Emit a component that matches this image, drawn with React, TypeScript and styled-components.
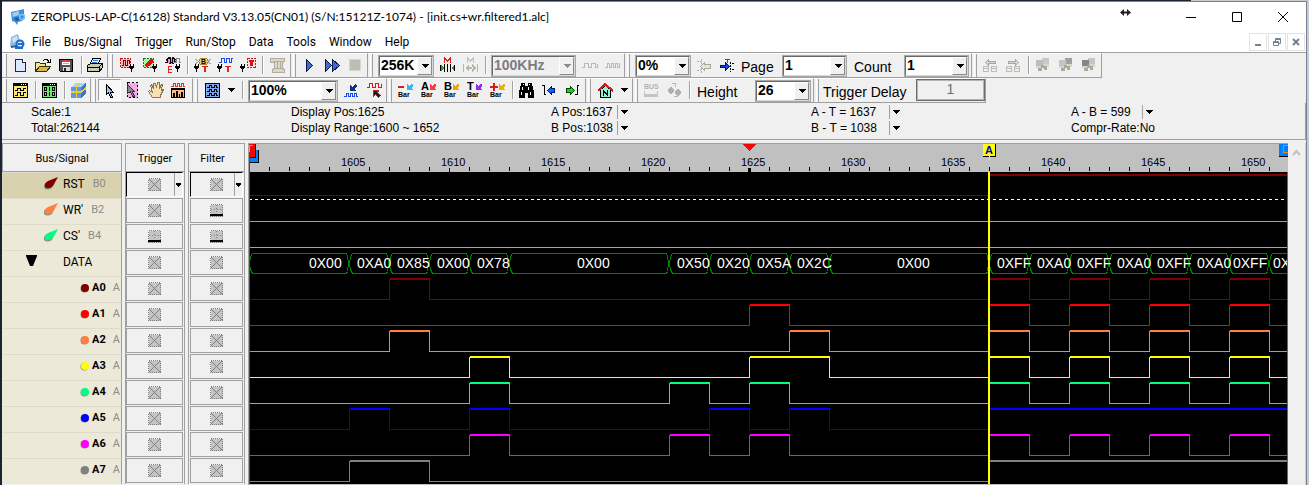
import React from "react";
import styled, { createGlobalStyle, css } from "styled-components";

const CAPTION = `Lato, "Open Sans", sans-serif`;
const UI = `Roboto, "Open Sans", sans-serif`;
const ARIAL = `"Liberation Sans", Arial, sans-serif`;
const LINE = "#a0a0a0";
const FACE = "#f0f0f0";

const GlobalStyle = createGlobalStyle`
  *, *::before, *::after { box-sizing: border-box; }
  body { margin: 0; background: #1b2430; color: #000; font: 12px/16px ${ARIAL}; overflow: hidden; }
  button, select, input { font: inherit; color: inherit; margin: 0; padding: 0; border: 0; background: none; border-radius: 0; }
  svg { display: block; flex: none; }
`;

/* ---------- window frame ---------- */

const Desktop = styled.div`
  min-height: 100vh;
  padding: 1px 2px 0 2px;
  background: linear-gradient(90deg, #1b2430 91%, #c9ccc9 91%);
`;

const AppWindow = styled.div`
  position: relative;
  display: flex;
  flex-direction: column;
  min-height: calc(100vh - 1px);
  border: 1px solid #76829a;
  border-width: 1px 1px 0 0;
  background: ${FACE};
`;

const TitleBar = styled.header`
  display: flex;
  align-items: center;
  height: 30px;
  padding-left: 8px;
  gap: 5px;
  background: #fff;
`;

const Title = styled.h1`
  flex: 1;
  margin: 0;
  font: 12px/16px ${CAPTION};
  white-space: nowrap;
`;

const CaptionButtons = styled.div`
  display: flex;
`;

const CaptionButton = styled.button`
  display: flex;
  align-items: center;
  justify-content: center;
  width: 46px;
  height: 28px;
`;

const ResizePointer = styled.svg`
  position: absolute;
  top: 6px;
  right: 175px;
`;

const MenuBar = styled.nav`
  display: flex;
  align-items: center;
  height: 20px;
  padding-left: 7px;
  background: #fff;
`;

const MenuItems = styled.div`
  display: flex;
  flex: 1;
  gap: 13px;
  margin-left: 7px;
`;

const MenuItem = styled.button`
  font: 12px/16px ${UI};
`;

const MdiButtons = styled.div`
  display: flex;
  gap: 1px;
  margin-right: 1px;
`;

const MdiButton = styled.button`
  display: flex;
  align-items: center;
  justify-content: center;
  width: 18px;
  height: 18px;
  border: 1px solid #e3e3e3;
`;

/* ---------- toolbars ---------- */

const ToolArea = styled.div`
  border-top: 1px solid ${LINE};
`;

const ToolRow = styled.div`
  display: flex;
  height: 25px;
`;

const ToolGroup = styled.div<{ $end?: number }>`
  display: flex;
  align-items: flex-start;
  padding-right: ${(p) => p.$end ?? 0}px;
  border-top: 1px solid #fff;
  border-right: 1px solid ${LINE};
  border-bottom: 1px solid ${LINE};
`;

const Grip = styled.span`
  align-self: stretch;
  width: 3px;
  margin: 0 2px;
  border-left: 1px solid #fff;
  border-right: 1px solid ${LINE};
`;

const ToolButton = styled.button<{ $pressed?: boolean }>`
  display: flex;
  align-items: center;
  justify-content: center;
  width: 23px;
  height: 22px;
  ${(p) =>
    p.$pressed &&
    css`
      background: #f8f8f8;
      border: 1px solid;
      border-color: ${LINE} #fff #fff ${LINE};
    `}
`;

const Separator = styled.span`
  width: 6px;
  height: 18px;
  margin-top: 2px;
  background: linear-gradient(90deg, transparent 3px, ${LINE} 3px 4px, #fff 4px 5px, transparent 5px);
`;

const DropButton = styled.button`
  display: flex;
  align-items: center;
  justify-content: center;
  width: 16px;
  height: 22px;
`;

const ToolLabel = styled.label<{ $width: number; $indent?: number }>`
  width: ${(p) => p.$width}px;
  padding: 4px 0 0 ${(p) => p.$indent ?? 2}px;
  font-size: 14px;
  line-height: 18px;
  white-space: nowrap;
`;

const ComboFrame = styled.span<{ $width: number; $disabled?: boolean }>`
  display: grid;
  grid-template-columns: 1fr 15px;
  width: ${(p) => p.$width}px;
  height: 22px;
  margin: 1px 2px 0 3px;
  border: 2px solid;
  border-color: #696969 #d8d8d8 #d8d8d8 #696969;
  outline: 1px solid #a8a8a8;
  outline-offset: -1px;
  background: ${(p) => (p.$disabled ? FACE : "#fff")};
`;

const ComboSelect = styled.select`
  grid-area: 1 / 1 / 2 / 3;
  appearance: none;
  padding: 0 0 2px 1px;
  font-size: 14px;
  line-height: 16px;
  font-weight: 700;
  &:disabled { color: #7c7c7c; opacity: 1; }
`;

const ComboArrow = styled.span`
  grid-area: 1 / 2;
  display: flex;
  align-items: center;
  justify-content: center;
  pointer-events: none;
  background: ${FACE};
  border: 1px solid;
  border-color: #fff #8a8a8a #8a8a8a #fff;
`;

const DelayField = styled.input`
  width: 69px;
  height: 22px;
  margin-left: 3px;
  padding-bottom: 2px;
  border: 1px solid #6d6d6d;
  outline: 1px solid #b4b4b4;
  outline-offset: -2px;
  font-size: 14px;
  text-align: center;
  color: #6d6d6d;
`;

/* ---------- status panel ---------- */

const StatusPanel = styled.section`
  display: flex;
  height: 37px;
  padding-left: 29px;
  border-bottom: 1px solid ${LINE};
  border-right: 1px solid ${LINE};
`;

const StatusColumn = styled.div`
  flex: 0 0 260px;
  padding-top: 1px;
  &:last-child { flex: 1; }
`;

const StatusLine = styled.div`
  display: flex;
  align-items: center;
  height: 16px;
  font-size: 12px;
  line-height: 16px;
  white-space: nowrap;
`;

const StatusText = styled.span<{ $width: number }>`
  width: ${(p) => p.$width}px;
`;

const StatusDrop = styled.button`
  display: flex;
  align-items: center;
  height: 14px;
  padding-left: 2px;
  border-left: 1px solid ${LINE};
`;

/* ---------- signal table ---------- */

const Workspace = styled.main`
  display: flex;
  flex: 1;
  margin-top: 3px;
`;

const SignalTable = styled.table`
  align-self: flex-start;
  table-layout: fixed;
  width: 243px;
  border-collapse: separate;
  border-spacing: 0;
  font: 11px/16px ${UI};
`;

const HeadCell = styled.th<{ $width: number; $gap: number }>`
  width: ${(p) => p.$width}px;
  height: 29px;
  padding: 0 0 0 ${(p) => p.$gap}px;
  font-weight: 400;
`;

const HeadBox = styled.div<{ $shift?: number }>`
  height: 29px;
  padding: 7px ${(p) => p.$shift ?? 0}px 0 0;
  border: 1px solid ${LINE};
`;

const NameCell = styled.td<{ $selected?: boolean }>`
  height: 26px;
  padding: 0;
  border-top: 1px solid #dedbcb;
  border-right: 1px solid ${LINE};
  background: ${(p) => (p.$selected ? "#d9d2ae" : "#ece9d8")};
`;

const NameRow = styled.div<{ $indent: number }>`
  display: flex;
  align-items: center;
  height: 25px;
  padding: 0 0 3px ${(p) => p.$indent}px;
  white-space: nowrap;
`;

const SignalName = styled.span<{ $bold?: boolean; $start: number }>`
  margin: 0 ${(p) => (p.$bold ? 7 : 8)}px 0 ${(p) => p.$start}px;
  font-size: ${(p) => (p.$bold ? 11 : 12)}px;
  font-weight: ${(p) => (p.$bold ? 700 : 400)};
`;

const PortName = styled.span`
  font-size: 11px;
  color: #8c8c8c;
`;

const StateCell = styled.td`
  height: 26px;
  padding: 0 0 0 3px;
`;

const StateFrame = styled.div<{ $filter?: boolean }>`
  height: 26px;
  padding: 0 1px 1px ${(p) => (p.$filter ? 1 : 0)}px;
  border-left: 1px solid ${LINE};
  border-right: 1px solid ${LINE};
`;

const StateButton = styled.button<{ $active?: boolean }>`
  display: flex;
  align-items: center;
  justify-content: center;
  width: 100%;
  height: 25px;
  border: 1px solid ${LINE};
  ${(p) =>
    p.$active &&
    css`
      justify-content: flex-end;
      border-color: #000 #fff #fff #000;
      padding-right: 1px;
    `}
`;

const StateDrop = styled.span<{ $space: number }>`
  display: flex;
  align-items: center;
  align-self: stretch;
  margin-left: ${(p) => p.$space}px;
  padding-left: 1px;
  border-left: 1px solid ${LINE};
`;

/* ---------- waveform ---------- */

const WavePane = styled.div`
  flex: 1;
  display: flex;
  min-width: 0;
  background: linear-gradient(#c0c0c0 29px, #000 29px);
  margin-left: 3px;
  border-top: 1px solid ${LINE};
  border-left: 1px solid ${LINE};
`;

const WaveSvg = styled.svg`
  flex: 1;
  width: 100%;
  height: 342px;
  font-family: ${ARIAL};
`;

const ScrollTrack = styled.div`
  display: flex;
  justify-content: center;
  width: 18px;
  padding-top: 6px;
  border-right: 1px solid #d0d0d0;
`;

/* ---------- icons ---------- */

type Drawing = React.ReactNode;

const Probe = ({ x, y }: { x: number; y: number }) => (
  <path fill="#000" d={`M${x} ${y}h1v2h2v-2h1v4h-1v1h-1v3h-1v-3h-1v-1h-1z`} />
);

const tee = (x: number): Drawing => <path fill="#e82020" d={`M${x} 11h6v1h-2v5h-2v-5h-2z`} />;

const bar = (mark: string, markColor: string, arrow: string): Drawing => (
  <>
    {mark === "-" ? (
      <path fill={markColor} d="M4 6h6v2h-6z" />
    ) : mark === "+" ? (
      <path fill={markColor} d="M4 6h3v-3h2v3h3v2h-3v3h-2v-3h-3z" />
    ) : (
      <text x="4" y="10" fontSize="11" fontWeight="700" fill={markColor}>{mark}</text>
    )}
    <path fill={arrow} d="M13 4v6h6l-2-2 2-2v-2h-2l-2 2z" />
    <text x="4" y="17" fontSize="7" fontWeight="700">Bar</text>
  </>
);

const pc = (screen: string, server: string): Drawing => (
  <>
    <path fill={server} d="M11 3h7v6h-7z" />
    <path fill={screen} d="M5 5h7v6h-7z" />
    <path fill="#dad7bf" d="M5 11h8v2h-8zM12 9h6v3h-6z" />
    <path fill="#a8a8a4" d="M10 10h3v3h-3zM7 13h4v3h-4zM13 11h3v4h-3z" />
  </>
);

const windowFrame = (fill: string): Drawing => (
  <>
    <path fill={fill} stroke="#000" d="M4.500 3.500h14v14h-14z" />
    <path fill="#000" d="M4 3h15v3h-15z" />
    <path fill="#fff" d="M12 4h1v1h-1zM14 4h1v1h-1zM16 4h1v1h-1z" />
  </>
);

const pageSplit: Drawing = (
  <path fill="none" stroke="#bcbcb4" d="M4.500 11.500h5v5h-5zM12.500 11.500h5v5h-5zM4 13.500h6M12 13.500h6" />
);

const art: Record<string, Drawing> = {
  create: (
    <>
      <path fill="#dce9ff" stroke="#1c2a4a" d="M6.500 4.500h7l3 3v9h-10z" />
      <path fill="#fff" stroke="#1c2a4a" d="M13.500 4.500v3h3" />
    </>
  ),
  open: (
    <>
      <path fill="#f4e48c" stroke="#3b3000" d="M3.500 16.500v-9h4l1 1h5v3" />
      <path fill="#d8b850" stroke="#3b3000" d="M3.500 16.500l4-5h11l-4 5z" />
      <path fill="none" stroke="#000" d="M11 5.500l2-1h2l2 2M18.500 4v4M15 7.500h4" />
    </>
  ),
  save: (
    <>
      <path fill="#505058" stroke="#000" d="M4.500 4.500h13v12h-12l-1-1z" />
      <path fill="#fff" d="M7 5h8v5h-8z" />
      <path fill="#d84030" d="M7 5h8v2h-8z" />
      <path stroke="#b0b0b0" d="M8 8.500h6" />
      <path fill="#d8d8d8" d="M8 12h7v4h-7z" />
      <path fill="#222" d="M9 13h2v3h-2z" />
    </>
  ),
  print: (
    <>
      <path fill="#dff4ff" stroke="#000" d="M8.500 3.500h8l-2 5h-8z" />
      <path stroke="#2f7ad0" d="M9 5.500h5M8 7.500h5" />
      <path fill="#c8c8b0" stroke="#000" d="M3.500 10.500l3-2h12v4l-3 4h-12z" />
      <path fill="#f0e020" d="M5 14h7v1h-7z" />
      <path fill="none" stroke="#000" d="M3 12.500h12v4M15 12l3-3" />
    </>
  ),
  trigBus: (
    <>
      <path fill="#f6bcbc" stroke="#c01818" strokeDasharray="2 1" d="M5.500 3.500h10v9h-10z" />
      <path fill="none" stroke="#800000" d="M7 10.500h1v-5h2v5h2v-5h2v3" />
      <Probe x={15} y={9} />
    </>
  ),
  trigEdge: (
    <>
      <path fill="#a8f4a8" stroke="#108010" strokeDasharray="2 1" d="M5.500 3.500h10v9h-10z" />
      <path fill="#e01010" d="M12 4h3v3l-4 4-3 1-1-2 2-3z" />
      <Probe x={15} y={9} />
    </>
  ),
  trigEvent: (
    <>
      <path fill="#f08af0" stroke="#301030" strokeDasharray="2 1" d="M7.500 2.500h5l2 2v2l-2 2h-5l-2-2v-2z" />
      <path fill="none" stroke="#000" d="M4 7.500h2v-4h3v4h2v-4h2v4" />
      <path fill="none" stroke="#888" d="M13 7.500h2v-4h3v4h2" />
      <path fill="#e82020" d="M7 11h4v1h-3v2h3v1h-3v2h3v1h-4z" />
      <Probe x={15} y={9} />
    </>
  ),
  busTrigger: (
    <>
      <path fill="#f3d37a" stroke="#a88430" d="M8.500 6.500l2-3h6l2 3-2 3h-6z" />
      <path stroke="#aaa" d="M5 4l3 2M5 9l3-2M21 4l-3 2M21 9l-3-2" />
      <text x="11" y="9" fontSize="7" fontWeight="700">B</text>
      <Probe x={5} y={9} />
      {tee(12)}
    </>
  ),
  waveTrigger: (
    <>
      <path fill="none" stroke="#1748ff" d="M6 7.500h2v-4h3v4h2v-4h3v4h2v-4h2" />
      <Probe x={5} y={9} />
      {tee(12)}
    </>
  ),
  probeTrigger: (
    <>
      <path fill="#fde4e4" stroke="#d01818" strokeDasharray="2 1" d="M11.500 3.500h8v9h-8z" />
      <path fill="#e01010" d="M13 5h5v2h-1v4h-3v-4h-1z" />
      <Probe x={5} y={9} />
    </>
  ),
  scroll: (
    <>
      <path fill="#dad7c4" stroke="#b0aea0" d="M5.500 3.500h14v3l-2 1v6l2 1v3h-12v-3l2-1v-6h-4z" />
      <path fill="none" stroke="#b0aea0" d="M8 6.500h9M9 13.500h8M12.500 7v7M15.500 7v7" />
    </>
  ),
  run: <path fill="#4468c8" stroke="#0c1a50" d="M8.500 4.500v12l6-6z" />,
  repeat: <path fill="#4468c8" stroke="#0c1a50" d="M4.500 4.500v12l6-6zM11.500 4.500v12l7-6z" />,
  stop: <path fill="#bdbdb5" stroke="#d8d6c8" d="M5.500 4.500h11v11h-11z" />,
  memOn: (
    <>
      <path fill="none" stroke="#e01818" d="M8.500 8v-5l3 3 3-3v5" />
      <path fill="#000" d="M8 9h1v8h-1zM14 9h1v8h-1zM11 9h1v8h-1zM4 10h1v6h-1zM18 10h1v6h-1z" />
      <path fill="#18a818" d="M5 10l3 3-3 3zM18 10l-3 3 3 3z" />
    </>
  ),
  memOff: (
    <>
      <path fill="none" stroke="#c4c2b4" d="M8.500 8v-5l3 3 3-3v5" />
      <path fill="#b9b7aa" d="M4 9h1v8h-1zM18 9h1v8h-1zM6 13l4-4v8zM17 13l-4-4v8zM9 12h5v2h-5z" />
    </>
  ),
  pulses: <path fill="none" stroke="#bcb9a6" d="M4 12.500h2v-4h4v4h3v-4h4v4h2v-4" />,
  pulsesDense: <path fill="none" stroke="#bcb9a6" d="M4 12.500h2v-4h2v4h2v-4h2v4h2v-4h2v4h2v-4h1" />,
  jumpOff: (
    <>
      <path fill="none" stroke="#b4b2a4" strokeDasharray="2 1" d="M8.500 4v14M4 6.500h4M4 15.500h4" />
      <path fill="#e6e4d6" stroke="#aaa89c" d="M7.500 11.500l4-4v2h6v4h-6v2z" />
    </>
  ),
  jumpOn: (
    <>
      <path fill="#1748e8" stroke="#001060" d="M4.500 10.500h5v-3l4 4-4 4v-3h-5z" />
      <path fill="none" stroke="#000" strokeDasharray="2 1" d="M14.500 7v10M16 8.500h2M16 14.500h2" />
      <path fill="#e01818" d="M9 4h5v1h-2v3h-1v-3h-2z" />
    </>
  ),
  pageBack: (
    <>
      <path fill="#d8d8d0" stroke="#a8a8a0" d="M6.500 7.500l3-3v2h7v2h-7v2z" />
      {pageSplit}
    </>
  ),
  pageNext: (
    <>
      <path fill="#d8d8d0" stroke="#a8a8a0" d="M16.500 7.500l-3-3v2h-7v2h7v2z" />
      {pageSplit}
    </>
  ),
  pcA: pc("#bcbcbc", "#c8c8c8"),
  pcB: pc("#c4c4c4", "#a0a0a0"),
  pcC: pc("#868686", "#c4c4c4"),
  waveWindow: (
    <>
      {windowFrame("#ffe870")}
      <path fill="none" stroke="#000" d="M6 10.500h2v-2h3v2h3v-2h3M6 15.500h2v-3h3v3h3v-3h3" />
    </>
  ),
  listWindow: (
    <>
      {windowFrame("#70e870")}
      <path fill="none" stroke="#000" d="M6.500 7.500h2v3h-2zM11.500 7v4M14.500 7.500h2v3h-2zM6.500 12.500h2v3h-2zM11.500 12v4M14.500 12.500h2v3h-2z" />
    </>
  ),
  cube: (
    <>
      <path fill="#5c9be0" d="M4 7l4-4h11v10l-5 5h-10z" />
      <path fill="#b0d4f8" d="M4 7l4-4h11l-5 4z" />
      <path fill="#3c78c0" d="M14 7l5-4v10l-5 5z" />
      <path fill="none" stroke="#f0c830" d="M4 11.500h10l5-4M4 12.500h10l5-4M9.500 18v-11l3-4" />
    </>
  ),
  pointer: <path fill="#a8c0f0" stroke="#000" d="M8.500 4.500v10l2-2 2 5h2l-2-5h3z" />,
  areaPointer: (
    <>
      <path fill="#f8a8e8" stroke="#000" strokeDasharray="2 2" d="M6.500 2.500h10v15h-10z" />
      <path fill="#888" stroke="#333" d="M6.500 4.500v9l3-2 2 5h2l-2-5h2z" />
    </>
  ),
  hand: (
    <path fill="#f8e0b0" stroke="#8c7850" d="M8.500 17.500l-4-6 1-1 3 2-2-7 1-1 2 4v-5h2l1 4 1-5h2v6l2-4h1l-1 6 1-1h1l-3 6v2z" />
  ),
  histogram: (
    <>
      <path fill="none" stroke="#e03010" d="M4 6.500h2v-3h2v3h2v-3h2v3h2v-3h2v3h2" />
      <path fill="#ffb888" stroke="#000" d="M4.500 8.500h13v9h-13z" />
      <path fill="#000" d="M4 8h14v2h-14zM6 13h2v5h-2zM9 11h2v7h-2zM12 14h1v4h-1zM14 12h2v6h-2z" />
    </>
  ),
  waveStyle: (
    <>
      <path fill="#80a8f0" stroke="#000" d="M5.500 3.500h14v14h-14z" />
      <path fill="none" stroke="#000" d="M7 7.500h2v-2h2v2h3v-2h2v2h2M7 11.500h2v-2h2v2h3v-2h2v2h2M7 15.500h2v-2h2v2h3v-2h2v2h2" />
    </>
  ),
  waveIn: (
    <>
      <path fill="none" stroke="#1748e8" d="M4 16.500h2v-3h2v3h2v-3h2v3h2v-3h2v3h2" />
      <path fill="#103080" d="M10 5v6h6l-2-2 3-3-2-2-3 3z" />
    </>
  ),
  waveOut: (
    <>
      <path fill="none" stroke="#e01818" d="M4 7.500h2v-4h3v4h3v-4h3v4h3v-4" />
      <path fill="#301010" stroke="#c02020" d="M10.500 10.500h5l-1 2 3 3-2 2-3-3-2 2z" />
    </>
  ),
  barDel: bar("-", "#e01818", "#30b8f0"),
  barA: bar("A", "#000", "#f04040"),
  barB: bar("B", "#000", "#f0a800"),
  barT: bar("T", "#000", "#9030e8"),
  barAdd: bar("+", "#e01818", "#f0b000"),
  find: (
    <>
      <path fill="#000" d="M6 3h4v3h3v-3h4v3h1v4h1v8h-6v-5h-3v5h-6v-8h1v-4h1z" />
      <path fill="#fff" d="M8 4h1v1h-1zM14 4h1v1h-1zM7 7h1v3h-1zM13 7h1v3h-1zM6 12h1v3h-1zM15 12h1v3h-1z" />
    </>
  ),
  prev: (
    <>
      <path fill="none" stroke="#000" d="M4 5.500h2v9h2" />
      <path fill="#1860ff" stroke="#001870" d="M9.500 10.500l4-4v2h3v4h-3v2z" />
    </>
  ),
  next: (
    <>
      <path fill="none" stroke="#000" d="M18 5.500h-2v9h-2" />
      <path fill="#20d020" stroke="#004800" d="M13.500 10.500l-4-4v2h-4v4h4v2z" />
    </>
  ),
  home: (
    <>
      <path fill="#90f0d8" stroke="#000" d="M7.500 9.500l5-4 5 4v8h-10z" />
      <path fill="none" stroke="#e01818" strokeWidth="2" d="M5 11l7-7 8 7" />
      <path fill="none" stroke="#000" d="M10.500 16v-5l4 4v-5" />
    </>
  ),
  busOff: (
    <>
      <text x="4" y="9" fontSize="7" fontWeight="700" fill="#b4b4b4">BUS</text>
      <path fill="#c4c4c4" d="M4 11h1v3h12v-3h1v6h-14z" />
    </>
  ),
  nodeOff: (
    <>
      <path fill="#b0b0a8" d="M5 9l3-2 3 2v3l-3 2-3-2zM12 11l3-2 3 2v3l-3 2-3-2z" />
      <path fill="none" stroke="#b8b8b0" d="M9 3.500h3v3M11 16.500h3v-2" />
    </>
  ),
};

const Icon = ({ name }: { name: string }) => (
  <svg width="23" height="20" viewBox="0 0 23 20" shapeRendering="crispEdges" fontFamily={ARIAL} aria-hidden="true">
    {art[name]}
  </svg>
);

const Caret = ({ color = "#000", small }: { color?: string; small?: boolean }) => (
  <svg width={small ? 5 : 8} height={4} viewBox={small ? "0 0 5 4" : "0 0 8 4"} shapeRendering="crispEdges" aria-hidden="true">
    <path fill={color} d={small ? "M0 0h5v1l-2 3h-1l-2-3z" : "M0 0h8l-4 4z"} />
  </svg>
);

const StateGlyph = ({ kind }: { kind: "any" | "low" }) => (
  <svg width="13" height="13" viewBox="0 0 13 13" shapeRendering="crispEdges" aria-hidden="true">
    <path fill="#c4c4c4" stroke="#808080" strokeDasharray="1 1" d="M.5.5h12v12h-12z" />
    {kind === "any" ? (
      <path stroke="#808080" d="M1 1l11 11M12 1l-11 11" />
    ) : (
      <>
        <path stroke="#808080" strokeDasharray="1 2" d="M6.500 1v9M1 5.500h11" />
        <path fill="#000" d="M0 10h13v2h-13z" />
      </>
    )}
  </svg>
);

/* ---------- toolbar parts ---------- */

const Combo = ({ value, width, label, id, disabled }: { value: string; width: number; label?: string; id?: string; disabled?: boolean }) => (
  <ComboFrame $width={width} $disabled={disabled}>
    <ComboSelect id={id} aria-label={label} defaultValue={value} disabled={disabled}>
      <option>{value}</option>
    </ComboSelect>
    <ComboArrow>
      <Caret color={disabled ? "#8c8c8c" : "#000"} />
    </ComboArrow>
  </ComboFrame>
);

const Tools = ({ names, pressed }: { names: string; pressed?: string }) => (
  <>
    {names.split(" ").map((n, i) =>
      n === "|" ? (
        <Separator key={i} />
      ) : (
        <ToolButton key={i} type="button" aria-label={n} $pressed={n === pressed}>
          <Icon name={n} />
        </ToolButton>
      ),
    )}
  </>
);

/* ---------- data ---------- */

const ROW = 26;
const STEP = 20;
const START = 1600;
const END = 1652;

type Signal = {
  name: string;
  port?: string;
  color?: string;
  kind: "port" | "bus" | "line";
  trigger?: "low";
  filter?: "low";
  high?: number[][];
};

const burst = [[1637, 1639], [1641, 1643], [1645, 1647], [1649, 1651]];

const signals: Signal[] = [
  { name: "RST", port: "B0", color: "#800000", kind: "port", high: [[1637, 1660]] },
  { name: "WR'", port: "B2", color: "#ff8040", kind: "port", filter: "low", high: [] },
  { name: "CS'", port: "B4", color: "#00ff80", kind: "port", trigger: "low", filter: "low", high: [] },
  { name: "DATA", kind: "bus" },
  { name: "A0", port: "A", color: "#800000", kind: "line", high: [[1607, 1609], ...burst] },
  { name: "A1", port: "A", color: "#ff0000", kind: "line", high: [[1625, 1627], ...burst] },
  { name: "A2", port: "A", color: "#ff8040", kind: "line", high: [[1607, 1609], [1627, 1629], ...burst] },
  { name: "A3", port: "A", color: "#ffff00", kind: "line", high: [[1611, 1613], [1625, 1629], ...burst] },
  { name: "A4", port: "A", color: "#00ff80", kind: "line", high: [[1611, 1613], [1621, 1623], [1625, 1627], ...burst] },
  { name: "A5", port: "A", color: "#0000ff", kind: "line", high: [[1605, 1607], [1611, 1613], [1623, 1625], [1627, 1629], [1637, 1660]] },
  { name: "A6", port: "A", color: "#ff00ff", kind: "line", high: [[1611, 1613], [1621, 1623], [1625, 1627], ...burst] },
  { name: "A7", port: "A", color: "#808080", kind: "line", high: [[1605, 1609], [1637, 1660]] },
];

/* from, to, value, label offset from the left edge of the cell */
const busCells: [number, number, string, number][] = [
  [1600, 1605, "0X00", 60],
  [1605, 1607, "0XA0", 8],
  [1607, 1609, "0X85", 8],
  [1609, 1611, "0X00", 8],
  [1611, 1613, "0X78", 8],
  [1613, 1621, "0X00", 68],
  [1621, 1623, "0X50", 8],
  [1623, 1625, "0X20", 8],
  [1625, 1627, "0X5A", 8],
  [1627, 1629, "0X2C", 8],
  [1629, 1637, "0X00", 68],
  [1637, 1639, "0XFF", 8],
  [1639, 1641, "0XA0", 8],
  [1641, 1643, "0XFF", 8],
  [1643, 1645, "0XA0", 8],
  [1645, 1647, "0XFF", 8],
  [1647, 1649, "0XA0", 8],
  [1649, 1651, "0XFF", 4],
  [1651, 1656, "0X", 4],
];

const px = (t: number) => (t - START) * STEP;

const Trace = ({ signal, top }: { signal: Signal; top: number }) => {
  const low = top + 23;
  const high = top + 2;
  const parts: React.ReactNode[] = [];
  let at = 0;
  (signal.high ?? []).forEach(([a, b], i) => {
    const x1 = px(a);
    const x2 = px(b);
    parts.push(
      <g key={i}>
        <rect x={at} y={low} width={x1 - at + 1} height="1" />
        <rect x={x1} y={high + 1} width="1" height={low - high} />
        <rect x={x1 + 1} y={high} width={x2 - x1} height="2" />
        <rect x={x2} y={high} width="1" height={low - high + 1} />
      </g>,
    );
    at = x2;
  });
  parts.push(<rect key="tail" x={at} y={low} width="4000" height="1" />);
  return <g fill={signal.color}>{parts}</g>;
};

const Waveform = () => {
  const ticks = Array.from({ length: END - START }, (_, i) => START + i).slice(1);
  return (
    <WaveSvg shapeRendering="crispEdges" role="img" aria-label="Captured waveform">
      <rect y="28" width="100%" height="313" fill="#000" />
      {ticks.map((t) => (
        <rect key={t} x={px(t) - (t === 1625 ? 1 : 0)} y={t % 5 ? 23 : 24} width={t === 1625 ? 3 : 1} height="4" fill="#000" />
      ))}
      {ticks.filter((t) => t % 5 === 0).map((t) => (
        <text key={t} x={px(t) - 8} y="22" fontSize="11">{t}</text>
      ))}
      {signals.map((s, i) => s.kind !== "bus" && <Trace key={s.name} signal={s} top={28 + i * ROW} />)}
      {busCells.map(([a, b]) => {
        const x1 = px(a);
        const x2 = px(b);
        return (
          <path
            key={a}
            fill="none"
            stroke="#008000"
            d={`M${x1 + 3.5} 109.500H${x2 - 2.5}l1 3 1 7-1 8-1 2H${x1 + 3.5}l-2-4-1-6 1-7z`}
          />
        );
      })}
      {busCells.map(([a, , value, offset]) => (
        <text key={a} x={px(a) + offset} y="124" fontSize="14" fill="#fff">{value}</text>
      ))}
      <line x1="0" x2="100%" y1="55.500" y2="55.500" stroke="#fff" strokeDasharray="3 3" />

      {/* start marker */}
      <path fill="#0080ff" d="M0 6h9v12h-9z" />
      <path fill="#000" d="M9 6h1v13h-9v-1h8z" />
      <path fill="#ff0000" d="M0 0h6v13h-6z" />
      <path fill="#000" d="M6 0h1v14h-6v-1h5z" />
      <path fill="none" stroke="#40d0ff" d="M.5 8v-7h3" />
      <rect y="13" width="1" height="328" fill="#ff0000" />

      {/* trigger marker */}
      <path fill="#ff0000" d="M494 0h13l-6 7h-1z" />

      {/* A bar */}
      <path fill="#ffff00" d="M734 0h12v12h-12z" />
      <path fill="#000" d="M746 0h1v13h-13v-1h12z" />
      <text x="736" y="10" fontSize="11" fontWeight="700" fill="#0000c0">A</text>
      <rect x="740" y="12" width="1" height="4" fill="#ffff00" />
      <rect x="739" y="28" width="2" height="313" fill="#ffff00" />

      {/* end marker, held at the right edge */}
      <svg x="100%" y="0" width="10" height="341" overflow="visible">
        <path fill="#0080ff" d="M-9 0h9v12h-9z" />
        <path fill="#000" d="M-9 12h9v1h-9z" />
        <path fill="none" stroke="#ff8000" d="M0 1.500h-4.500v7h4.500" />
        <rect x="-1" y="28" width="1" height="313" fill="#0080ff" />
      </svg>
      <rect y="340" width="100%" height="2" fill="#c0c0c0" />
    </WaveSvg>
  );
};

const SignalMark = ({ signal }: { signal: Signal }) => {
  if (signal.kind === "bus")
    return (
      <svg width="12" height="14" viewBox="0 0 12 14" aria-hidden="true">
        <path d="M0 0h11v1l-4 10h-3l-4-10z" />
      </svg>
    );
  if (signal.kind === "port")
    return (
      <svg width="14" height="14" viewBox="0 0 14 14" aria-hidden="true">
        <path fill="#909080" d="M11 3L3 5Q-1 7 0 11Q3 14 8 11z" />
        <path fill={signal.color} d="M14 0L4 4Q0 6 1 10Q4 13 9 9z" />
      </svg>
    );
  return (
    <svg width="10" height="10" viewBox="0 0 10 10" aria-hidden="true">
      <circle cx="4.500" cy="5.500" r="4" fill="#888878" />
      <circle cx="5" cy="5" r="4" fill={signal.color} />
    </svg>
  );
};

/* space before the mark, and between the mark and the name */
const layoutOf = { port: [42, 5], bus: [24, 25], line: [78, 2] };

const statusDrop = (
  <StatusDrop type="button" aria-label="Choose value">
    <Caret />
  </StatusDrop>
);

export default function App() {
  return (
    <Desktop>
      <GlobalStyle />
      <AppWindow>
        <TitleBar>
          <svg width="16" height="16" viewBox="0 0 16 16" aria-hidden="true">
            <path fill="#3f8fd8" d="M1 3l9-2 4-1v5l1 4-3 3-4 1-1 3-2-3-3-1z" />
            <path fill="#9fd0f4" d="M2 4l7-2v4l-6 2z" />
            <path fill="#1d5ea8" d="M4 9l5-1 1 3-4 1z" />
            <circle cx="12" cy="8" r="2.500" fill="none" stroke="#7cc4f8" strokeWidth="1.500" />
          </svg>
          <Title>ZEROPLUS-LAP-C(16128) Standard V3.13.05(CN01) (S/N:15121Z-1074) - [init.cs+wr.filtered1.alc]</Title>
          <CaptionButtons>
            <CaptionButton type="button" aria-label="Minimize">
              <svg width="10" height="10" viewBox="0 0 10 10"><path stroke="#000" d="M0 5.500h10" /></svg>
            </CaptionButton>
            <CaptionButton type="button" aria-label="Maximize">
              <svg width="10" height="10" viewBox="0 0 10 10"><path fill="none" stroke="#000" d="M.5.5h9v9h-9z" /></svg>
            </CaptionButton>
            <CaptionButton type="button" aria-label="Close">
              <svg width="10" height="10" viewBox="0 0 10 10"><path stroke="#000" d="M0 0l10 10M10 0l-10 10" /></svg>
            </CaptionButton>
          </CaptionButtons>
        </TitleBar>
        <ResizePointer width="11" height="9" viewBox="0 0 11 9" aria-hidden="true">
          <path fill="#222" d="M0 4.500L4 1v2.500h3V1l4 3.500L7 8V5.500H4V8z" />
        </ResizePointer>

        <MenuBar>
          <svg width="16" height="16" viewBox="0 0 16 16" aria-hidden="true">
            <path fill="#8cbce4" d="M2 3l7-3 2 7-3 5-7 1z" />
            <path fill="#2c5c98" d="M3 2l2-1M2 12l6-1v2l-6 1z" />
            <path fill="#c8e4f8" d="M3 4l5-2 1 4-5 3z" />
            <circle cx="11" cy="10" r="3.500" fill="#e8f4ff" stroke="#1c6cc8" strokeWidth="2" />
            <path stroke="#1c6cc8" strokeWidth="2" d="M9 10h5M6 14h8" />
          </svg>
          <MenuItems>
            {["File", "Bus/Signal", "Trigger", "Run/Stop", "Data", "Tools", "Window", "Help"].map((m) => (
              <MenuItem key={m} type="button">{m}</MenuItem>
            ))}
          </MenuItems>
          <MdiButtons>
            <MdiButton type="button" aria-label="Minimize document">
              <svg width="10" height="10" viewBox="0 0 10 10"><path fill="#71849a" d="M2 7h6v2h-6z" /></svg>
            </MdiButton>
            <MdiButton type="button" aria-label="Restore document">
              <svg width="10" height="10" viewBox="0 0 10 10"><path fill="none" stroke="#71849a" d="M1.500 4.500h5v4h-5zM1 5.500h6M3.500 4v-2.500h5v5h-2M3 2.500h6" /></svg>
            </MdiButton>
            <MdiButton type="button" aria-label="Close document">
              <svg width="10" height="10" viewBox="0 0 10 10"><path stroke="#71849a" strokeWidth="2" d="M2 2l6 6M8 2l-6 6" /></svg>
            </MdiButton>
          </MdiButtons>
        </MenuBar>

        <ToolArea>
          <ToolRow>
            <ToolGroup><Grip /><Tools names="create open save | print" /></ToolGroup>
            <ToolGroup $end={2}><Grip /><Tools names="trigBus trigEdge trigEvent | busTrigger waveTrigger probeTrigger | scroll" /></ToolGroup>
            <ToolGroup><Grip /><Tools names="run repeat stop" /></ToolGroup>
            <ToolGroup>
              <Grip />
              <Combo value="256K" width={56} label="RAM size" />
              <Tools names="memOn memOff |" />
              <Combo value="100KHz" width={85} label="Sampling frequency" disabled />
              <Tools names="pulses pulsesDense" />
            </ToolGroup>
            <ToolGroup>
              <Grip />
              <Combo value="0%" width={56} label="Trigger position" />
              <Tools names="jumpOff jumpOn" />
              <ToolLabel htmlFor="page" $width={40}>Page</ToolLabel>
              <Combo value="1" width={65} id="page" />
              <ToolLabel htmlFor="count" $width={52} $indent={5}>Count</ToolLabel>
              <Combo value="1" width={65} id="count" />
            </ToolGroup>
            <ToolGroup $end={1}><Grip /><Tools names="pageBack pageNext | pcA pcB pcC" /></ToolGroup>
          </ToolRow>
          <ToolRow>
            <ToolGroup><Grip /><Tools names="waveWindow | listWindow | cube" /></ToolGroup>
            <ToolGroup $end={2}><Grip /><Tools names="pointer areaPointer hand histogram" pressed="pointer" /></ToolGroup>
            <ToolGroup>
              <Grip />
              <Tools names="waveStyle" />
              <DropButton type="button" aria-label="Waveform style"><Caret /></DropButton>
              <Separator />
              <Combo value="100%" width={90} label="Zoom" />
              <Tools names="waveIn waveOut" />
            </ToolGroup>
            <ToolGroup $end={1}><Grip /><Tools names="barDel barA barB barT barAdd | find prev next" /></ToolGroup>
            <ToolGroup>
              <Grip />
              <Tools names="home" />
              <DropButton type="button" aria-label="Noise filter"><Caret /></DropButton>
            </ToolGroup>
            <ToolGroup>
              <Grip />
              <Tools names="busOff nodeOff |" />
              <ToolLabel htmlFor="height" $width={60} $indent={5}>Height</ToolLabel>
              <Combo value="26" width={56} id="height" />
            </ToolGroup>
            <ToolGroup>
              <Grip />
              <ToolLabel htmlFor="delay" $width={92}>Trigger Delay</ToolLabel>
              <DelayField id="delay" defaultValue="1" disabled />
            </ToolGroup>
          </ToolRow>
        </ToolArea>

        <StatusPanel>
          <StatusColumn>
            <StatusLine>Scale:1</StatusLine>
            <StatusLine>Total:262144</StatusLine>
          </StatusColumn>
          <StatusColumn>
            <StatusLine>Display Pos:1625</StatusLine>
            <StatusLine>Display Range:1600 ~ 1652</StatusLine>
          </StatusColumn>
          <StatusColumn>
            <StatusLine><StatusText $width={66}>A Pos:1637</StatusText>{statusDrop}</StatusLine>
            <StatusLine><StatusText $width={66}>B Pos:1038</StatusText>{statusDrop}</StatusLine>
          </StatusColumn>
          <StatusColumn>
            <StatusLine><StatusText $width={78}>A - T = 1637</StatusText>{statusDrop}</StatusLine>
            <StatusLine><StatusText $width={78}>B - T = 1038</StatusText>{statusDrop}</StatusLine>
          </StatusColumn>
          <StatusColumn>
            <StatusLine><StatusText $width={71}>A - B = 599</StatusText>{statusDrop}</StatusLine>
            <StatusLine>Compr-Rate:No</StatusLine>
          </StatusColumn>
        </StatusPanel>

        <Workspace>
          <SignalTable>
            <thead>
              <tr>
                <HeadCell $width={120} $gap={0}><HeadBox>Bus/Signal</HeadBox></HeadCell>
                <HeadCell $width={63} $gap={3}><HeadBox>Trigger</HeadBox></HeadCell>
                <HeadCell $width={60} $gap={3}><HeadBox $shift={8}>Filter</HeadBox></HeadCell>
              </tr>
            </thead>
            <tbody>
              {signals.map((s, i) => (
                <tr key={s.name}>
                  <NameCell $selected={i === 0}>
                    <NameRow $indent={layoutOf[s.kind][0]}>
                      <SignalMark signal={s} />
                      <SignalName $start={layoutOf[s.kind][1]} $bold={s.kind === "line"}>{s.name}</SignalName>
                      {s.port && <PortName>{s.port}</PortName>}
                    </NameRow>
                  </NameCell>
                  {[s.trigger, s.filter].map((state, c) => (
                    <StateCell key={c}>
                      <StateFrame $filter={c === 1}>
                        <StateButton type="button" $active={i === 0} aria-label={`${s.name} ${c ? "filter" : "trigger"}`}>
                          <StateGlyph kind={state ?? "any"} />
                          {i === 0 && <StateDrop $space={c ? 11 : 13}><Caret small /></StateDrop>}
                        </StateButton>
                      </StateFrame>
                    </StateCell>
                  ))}
                </tr>
              ))}
            </tbody>
          </SignalTable>
          <WavePane>
            <Waveform />
          </WavePane>
          <ScrollTrack>
            <svg width="9" height="8" viewBox="0 0 9 8" aria-hidden="true">
              <path fill="none" stroke="#c0c0c0" strokeWidth="2" d="M1 6l3.500-4L8 6" />
            </svg>
          </ScrollTrack>
        </Workspace>
      </AppWindow>
    </Desktop>
  );
}
